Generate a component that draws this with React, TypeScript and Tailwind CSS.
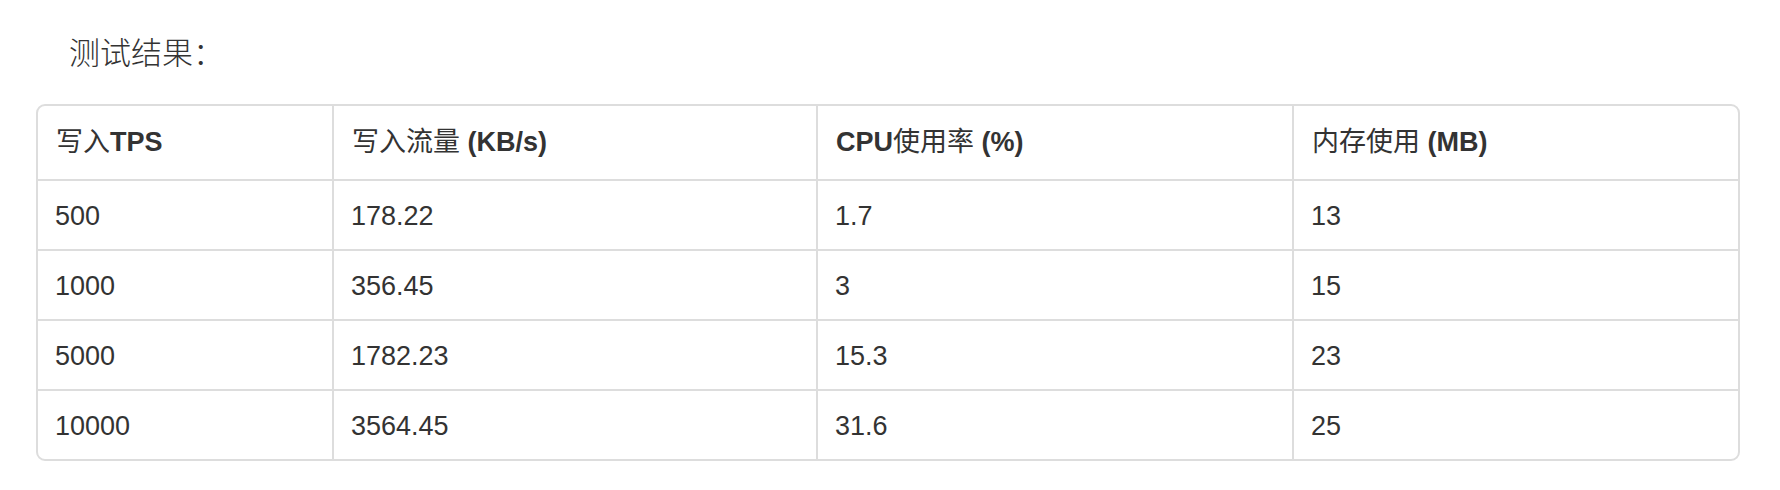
const FONT = "font-['Liberation_Sans','Noto_Sans_CJK_SC',sans-serif]";

const rows = [
    ["500", "178.22", "1.7", "13"],
    ["1000", "356.45", "3", "15"],
    ["5000", "1782.23", "15.3", "23"],
    ["10000", "3564.45", "31.6", "25"],
];

const cols = "grid grid-cols-[296px_484px_476px_444px]";

function HeadCell({ children, last }: { children: React.ReactNode; last?: boolean }) {
    return (
        <div
            className={
                "flex h-[75px] items-center border-b-2 border-[#dddddd] pl-[18px] font-bold " +
                (last ? "" : "border-r-2")
            }
        >
            {children}
        </div>
    );
}

export default function App() {
    return (
        <div className={`${FONT} h-[490px] w-full bg-white text-[#333333]`}>
            <div className="pl-[69px] pt-[33px] text-[31px] leading-[42px] font-light">
                测试结果：
            </div>

            <div className="ml-[36px] mt-[29px] w-[1704px] overflow-hidden rounded-[9px] border-2 border-[#dddddd] text-[27px]">
                <div className={cols}>
                    <HeadCell>
                        <span className="font-normal">写入</span>TPS
                    </HeadCell>
                    <HeadCell>
                        <span className="font-normal">写入流量</span>&nbsp;(KB/s)
                    </HeadCell>
                    <HeadCell>
                        CPU<span className="font-normal">使用率</span>&nbsp;(%)
                    </HeadCell>
                    <HeadCell last>
                        <span className="font-normal">内存使用</span>&nbsp;(MB)
                    </HeadCell>
                </div>

                {rows.map((row, i) => {
                    const lastRow = i === rows.length - 1;
                    return (
                        <div key={row[0]} className={cols}>
                            {row.map((cell, j) => (
                                <div
                                    key={j}
                                    className={
                                        "flex items-center border-[#dddddd] pl-[17px] pt-[2px] " +
                                        (lastRow ? "h-[68px] " : "h-[70px] border-b-2 ") +
                                        (j < row.length - 1 ? "border-r-2" : "")
                                    }
                                >
                                    {cell}
                                </div>
                            ))}
                        </div>
                    );
                })}
            </div>
        </div>
    );
}
